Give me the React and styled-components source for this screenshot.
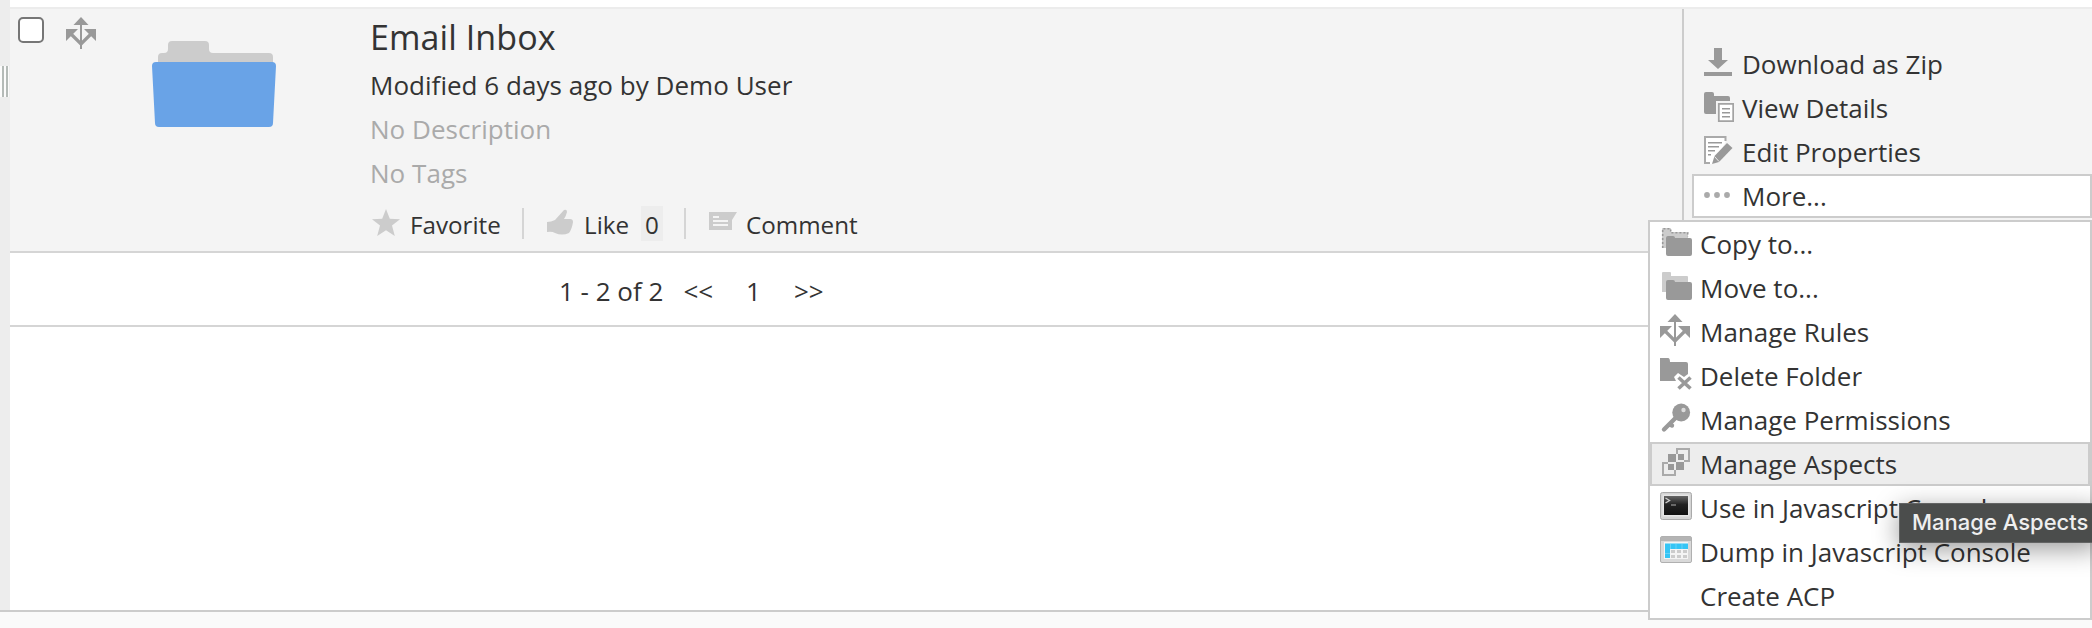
import React from "react";
import styled, { createGlobalStyle } from "styled-components";

const GlobalStyle = createGlobalStyle`
  * { box-sizing: border-box; }
  body {
    margin: 0;
    background: #fff;
    color: #333;
    font-family: "Open Sans", sans-serif;
    font-size: 26px;
    line-height: 44px;
    overflow: hidden;
  }
`;

const Page = styled.div`
  position: relative;
  display: flex;
  flex-direction: column;
  height: 628px;
  overflow: hidden;
`;

const Workspace = styled.div`
  display: flex;
  height: 610px;
`;

const Splitter = styled.div`
  width: 10px;
  padding-top: 66px;
  background: #ededed;
`;

const SplitterGrip = styled.div`
  display: flex;
  gap: 2px;
  width: 9px;
  height: 31px;
  padding-left: 2px;
  background: #fbfbfb;
`;

const GripLine = styled.div`
  width: 2px;
  background: #b4bab7;
`;

const Listing = styled.main`
  flex: 1;
  padding-top: 7px;
`;

const DocumentRow = styled.section`
  display: flex;
  height: 246px;
  border-top: 2px solid #ececec;
  border-bottom: 2px solid #d5d5d5;
  background: #f4f4f4;
`;

const SelectCell = styled.div`
  display: flex;
  align-items: flex-start;
  gap: 22px;
  width: 132px;
  padding: 8px 0 0 8px;
`;

const Checkbox = styled.button`
  width: 26px;
  height: 26px;
  padding: 0;
  border: 2px solid #767676;
  border-radius: 5px;
  background: #fff;
`;

const ThumbCell = styled.div`
  width: 228px;
  padding: 30px 0 0 8px;
`;

const Details = styled.div`
  flex: 1;
`;

const Title = styled.h3`
  margin: 0;
  padding-top: 4px;
  height: 54px;
  font-size: 34px;
  font-weight: 400;
  letter-spacing: 0.08px;
  line-height: 48px;
`;

const Meta = styled.div`
  color: ${(p) => (p.$faded ? "#aaa" : "#333")};
  letter-spacing: 0.03px;
`;

const Social = styled.div`
  display: flex;
  align-items: center;
  height: 35px;
  margin-top: 11px;
  font-size: 24.2px;
  line-height: 35px;
`;

const SocialAction = styled.div`
  display: flex;
  align-items: center;
  width: ${(p) => p.$width}px;
  padding-left: ${(p) => p.$indent || 0}px;
  border-right: ${(p) => (p.$last ? "0" : "2px solid #d5d5d5")};
  height: 31px;
  white-space: nowrap;
  svg { margin: 1px 8px 0 0; flex: none; }
`;

const SocialLabel = styled.span`
  padding-top: 2px;
`;

const Count = styled.span`
  width: 22px;
  height: 35px;
  margin-left: 12px;
  background: #ededed;
  line-height: 37px;
  text-align: center;
`;

const Actions = styled.aside`
  width: 410px;
  padding: 33px 0 0 8px;
  border-left: 2px solid #ccc;
`;

const ActionItem = styled.div`
  display: flex;
  align-items: flex-start;
  gap: 8px;
  height: 44px;
  padding: 2px 8px;
  border: 2px solid ${(p) => (p.$active ? "#ccc" : "transparent")};
  background: ${(p) => p.$fill || "transparent"};
  line-height: 40px;
  white-space: nowrap;
  svg { flex: none; }
  span { margin-top: -2px; }
`;

const Paginator = styled.nav`
  display: flex;
  height: 74px;
  padding: 16px 0 0 549px;
  border-bottom: 2px solid #d5d5d5;
  white-space: pre;
`;

const PageLink = styled.span`
  margin-left: ${(p) => p.$gap}px;
`;

const Footer = styled.footer`
  height: 18px;
  border-top: 2px solid #ccc;
  background: #fafafa;
`;

const Menu = styled.div`
  position: absolute;
  top: 220px;
  right: 0;
  width: 444px;
  border: 2px solid #ccc;
  background: #fff;
`;

const Tooltip = styled.div`
  position: absolute;
  top: 503px;
  left: 1899px;
  width: 200px;
  height: 40px;
  padding-left: 12px;
  border: 1px solid #636464;
  background: #4b4d4c;
  color: #efefef;
  box-shadow: 0 6px 26px rgba(0, 0, 0, 0.4);
  font-family: Inter, sans-serif;
  font-size: 22px;
  font-weight: 500;
  line-height: 37px;
  white-space: nowrap;
`;

const Icon = ({ children, width = 32, height = 32 }) => (
  <svg width={width} height={height} viewBox={`0 0 ${width} ${height}`} fill="#999">
    {children}
  </svg>
);

const RulesIcon = () => (
  <Icon>
    <path d="M15 0L22.5 8H16v24h-2V8H7.500z M0 12h12L0 24z M30 12H18l12 12z" />
    <path d="M4 16l11 11 11-11" fill="none" stroke="#999" strokeWidth="3.2" />
  </Icon>
);

const DownloadIcon = () => (
  <Icon>
    <path d="M12 2h8v12h6l-10 9L6 14h6z M2 26h28v4H2z" />
  </Icon>
);

const DetailsIcon = () => (
  <Icon>
    <path d="M2 4q0-2 2-2h6q2 0 2 2v2h14q2 0 2 2v3H14v13H4q-2 0-2-2z" />
    <path d="M16.800 13.800h14.400v17.400H16.800z" fill="#fff" stroke="#a3a3a3" strokeWidth="1.8" />
    <path d="M20 18h8v1.500h-8z M20 22h8v1.500h-8z M20 26h8v1.500h-8z" />
  </Icon>
);

const EditIcon = () => (
  <Icon>
    <path d="M3 3h20.500v5l-12 22H3z" fill="#fff" />
    <path d="M23.500 7V3H3v26h5" fill="none" stroke="#aaa" strokeWidth="2" />
    <path d="M6 8h14v1.600H6z M6 12h11v1.600H6z M6 16h7v1.600H6z M6 20h3v1.600H6z" />
    <path d="M25 9l5.500 5L17 28l-7 2 2.500-8z" />
    <path d="M12.500 22.500l4.500 5" stroke="#eee" strokeWidth="1" />
  </Icon>
);

const MoreIcon = () => (
  <Icon>
    {[5, 15, 25].map((cx) => <circle key={cx} cx={cx} cy="17" r="2.900" fill="#aaa" />)}
  </Icon>
);

const BACK_FOLDER = "M2 3q0-1 1-1h7q1 0 1 1v3h16q1 0 1 1v8H8v7H2z";
const FRONT_FOLDER = "M6 12q0-2 2-2h5q2 0 2 2h15q2 0 2 2v14q0 2-2 2H8q-2 0-2-2z";

const CopyIcon = () => (
  <Icon>
    <path d={BACK_FOLDER} fill="#ccc" />
    <path d="M2.700 22V2.700h8v4h17v4" fill="none" stroke="#999" strokeWidth="1.600" strokeDasharray="2 2" />
    <path d={FRONT_FOLDER} />
  </Icon>
);

const MoveIcon = () => (
  <Icon>
    <path d={BACK_FOLDER} fill="#ccc" />
    <path d={FRONT_FOLDER} />
  </Icon>
);

const DeleteIcon = () => (
  <Icon>
    <path d="M0 0h8q2 0 2 4h16q2 0 2 2v10l-4 3-6-4-4 4 2 4H0z" />
    <path d="M18.500 19.500l12 11M30.500 19.500l-12 11" stroke="#999" strokeWidth="3.600" />
  </Icon>
);

const KeyIcon = () => (
  <Icon>
    <path d="M16 15.500L4 27.500M10 22.500l2 1" stroke="#999" strokeWidth="4.400" strokeLinecap="round" />
    <circle cx="21.200" cy="10.500" r="8.900" />
    <circle cx="23.500" cy="8" r="2.200" fill="#dcdcdc" />
  </Icon>
);

const AspectsIcon = () => (
  <Icon>
    <path d="M17 8V3h12v12h-5M8 17H3v12h12v-5" fill="none" stroke="#aaa" strokeWidth="2" />
    <path d="M8 8h8v8H8z M18 8h6v6h-6z M8 18h6v6H8z M16 16h8v8h-8z" />
  </Icon>
);

const ConsoleIcon = () => (
  <Icon>
    <defs>
      <linearGradient id="screen" x1="0" y1="0" x2="0" y2="1">
        <stop offset="0" stopColor="#666" />
        <stop offset="0.45" stopColor="#222" />
        <stop offset="1" stopColor="#111" />
      </linearGradient>
    </defs>
    <rect x="0.500" y="2.500" width="31" height="27" rx="2" fill="#d4d4d4" stroke="#aaa" />
    <rect x="2.500" y="4.500" width="27" height="22" fill="#e6e6e6" />
    <rect x="4" y="6" width="24" height="19" fill="url(#screen)" />
    <path d="M5.500 8l4 2.500-4 2.500" fill="none" stroke="#ccc" strokeWidth="1.400" />
    <path d="M11 15h5" stroke="#888" strokeWidth="1.400" />
  </Icon>
);

const WindowIcon = () => (
  <Icon>
    <rect x="0.500" y="2.500" width="31" height="26" rx="1.500" fill="#d9d9d9" stroke="#b0b0b0" />
    <rect x="1" y="3" width="30" height="4" fill="#b4b4b4" />
    <rect x="4" y="8" width="24" height="17" fill="#f4f4f4" />
    <path d="M5 9.500h23v5.500H5z M5 15h5v9H5z" fill="#35c5f5" />
    <path d="M11 16h4v3h-4z M17 16h4v3h-4z M23 16h4v3h-4z M11 21h4v3h-4z M17 21h4v3h-4z M23 21h4v3h-4z" fill="#ccc" />
    <path d="M10.500 10v5M16 10v5M22 10v5M5 19.500h5" stroke="#75d6f8" strokeWidth="0.800" />
  </Icon>
);

const StarIcon = () => (
  <Icon>
    <path d="M16 1l3.800 9.800 10.200.4-8 6.300L24.800 28 16 22.300 7.200 28 10 17.500l-8-6.300 10.200-.4z" fill="#ccc" />
  </Icon>
);

const LikeIcon = () => (
  <Icon>
    <path d="M3 14q4 0 8-2l9-10q3-1 3 2-1 4-3 7h6q3 0 3 3-1 7-4 11-7 3-14 0-3-2-8-1z" fill="#ccc" />
  </Icon>
);

const CommentIcon = () => (
  <Icon>
    <path d="M3 4h28l-5 8v10H3z" fill="#ccc" />
    <path d="M7 8h6v2H7z M7 12h15v2H7z M7 16h15v2H7z" fill="#f4f4f4" />
  </Icon>
);

const FolderThumb = () => (
  <Icon width={128} height={92}>
    <path d="M8 25V18q0-4 4-4h2q4 0 4-4V6q0-4 4-4h33q4 0 4 4v4q0 4 4 4h56q4 0 4 4v7z" fill="#ccc" />
    <path d="M2 27q0-4 4-4h116q4 0 4 4l-3 57q0 4-4 4H9q-4 0-4-4z" fill="#69a3e7" />
  </Icon>
);

const ACTIONS = [
  { label: "Download as Zip", icon: DownloadIcon },
  { label: "View Details", icon: DetailsIcon },
  { label: "Edit Properties", icon: EditIcon },
  { label: "More...", icon: MoreIcon, active: true, fill: "#fff" },
];

const MENU = [
  { label: "Copy to...", icon: CopyIcon },
  { label: "Move to...", icon: MoveIcon },
  { label: "Manage Rules", icon: RulesIcon },
  { label: "Delete Folder", icon: DeleteIcon },
  { label: "Manage Permissions", icon: KeyIcon },
  { label: "Manage Aspects", icon: AspectsIcon, active: true, fill: "#ededed" },
  { label: "Use in Javascript Console", icon: ConsoleIcon },
  { label: "Dump in Javascript Console", icon: WindowIcon },
  { label: "Create ACP", icon: Icon },
];

const renderItem = ({ label, icon: Glyph, active, fill }) => (
  <ActionItem key={label} $active={active} $fill={fill}>
    <Glyph />
    <span>{label}</span>
  </ActionItem>
);

export default function App() {
  return (
    <Page>
      <GlobalStyle />
      <Workspace>
        <Splitter>
          <SplitterGrip>
            <GripLine />
            <GripLine />
          </SplitterGrip>
        </Splitter>
        <Listing>
          <DocumentRow>
            <SelectCell>
              <Checkbox aria-label="Select" />
              <RulesIcon />
            </SelectCell>
            <ThumbCell>
              <FolderThumb />
            </ThumbCell>
            <Details>
              <Title>Email Inbox</Title>
              <Meta>Modified 6 days ago by Demo User</Meta>
              <Meta $faded>No Description</Meta>
              <Meta $faded>No Tags</Meta>
              <Social>
                <SocialAction $width={154}>
                  <StarIcon />
                  <SocialLabel>Favorite</SocialLabel>
                </SocialAction>
                <SocialAction $width={162} $indent={20}>
                  <LikeIcon />
                  <SocialLabel>Like</SocialLabel>
                  <Count>0</Count>
                </SocialAction>
                <SocialAction $width={180} $indent={20} $last>
                  <CommentIcon />
                  <SocialLabel>Comment</SocialLabel>
                </SocialAction>
              </Social>
            </Details>
            <Actions>{ACTIONS.map(renderItem)}</Actions>
          </DocumentRow>
          <Paginator>
            <span>1 - 2 of 2</span>
            <PageLink $gap={20}>&lt;&lt;</PageLink>
            <PageLink $gap={33}>1</PageLink>
            <PageLink $gap={33}>&gt;&gt;</PageLink>
          </Paginator>
        </Listing>
      </Workspace>
      <Footer />
      <Menu>{MENU.map(renderItem)}</Menu>
      <Tooltip>Manage Aspects</Tooltip>
    </Page>
  );
}
